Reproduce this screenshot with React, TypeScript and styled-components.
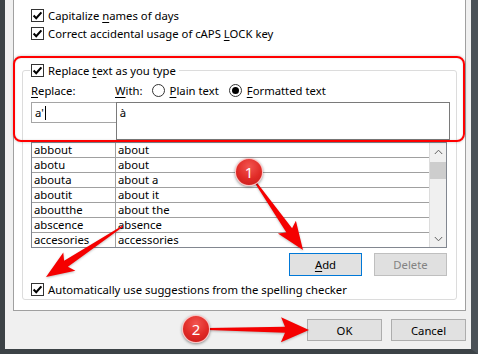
import React from 'react';
import styled, { createGlobalStyle } from 'styled-components';

const GlobalStyle = createGlobalStyle`
  html, body {
    margin: 0;
    padding: 0;
    background: #f0f0f0;
  }
  body {
    font-family: "Noto Sans", "Open Sans", sans-serif;
    font-size: 11.3px;
    color: #000;
  }
`;

const replacements: [string, string][] = [
  ['abbout', 'about'],
  ['abotu', 'about'],
  ['abouta', 'about a'],
  ['aboutit', 'about it'],
  ['aboutthe', 'about the'],
  ['abscence', 'absence'],
  ['accesories', 'accessories'],
];

type Pt = [number, number];

// tapered annotation arrow, thin at the tail and wide at the head
const arrowPoints = (
  tail: Pt,
  tip: Pt,
  tailW: number,
  neckW: number,
  headW: number,
  headLen: number
) => {
  const [x1, y1] = tail;
  const [x2, y2] = tip;
  const len = Math.hypot(x2 - x1, y2 - y1);
  const ux = (x2 - x1) / len;
  const uy = (y2 - y1) / len;
  const nx = -uy;
  const ny = ux;
  const bx = x2 - ux * headLen;
  const by = y2 - uy * headLen;
  const back = 4;
  const pts: Pt[] = [
    [x1 + (nx * tailW) / 2, y1 + (ny * tailW) / 2],
    [bx + (nx * neckW) / 2, by + (ny * neckW) / 2],
    [bx - ux * back + (nx * headW) / 2, by - uy * back + (ny * headW) / 2],
    [x2, y2],
    [bx - ux * back - (nx * headW) / 2, by - uy * back - (ny * headW) / 2],
    [bx - (nx * neckW) / 2, by - (ny * neckW) / 2],
    [x1 - (nx * tailW) / 2, y1 - (ny * tailW) / 2],
  ];
  return pts.map(p => `${p[0].toFixed(1)},${p[1].toFixed(1)}`).join(' ');
};

const CheckBox = ({ checked = true }: { checked?: boolean }) => (
  <Box>
    {checked && (
      <svg width="11" height="11" viewBox="0 0 11 11">
        <path d="M1.6 5.6 L4.2 8.2 L9.4 2.4" fill="none" stroke="#000" strokeWidth="2.1" />
      </svg>
    )}
  </Box>
);

const Chevron = ({ down }: { down?: boolean }) => (
  <svg width="9" height="6" viewBox="0 0 9 6">
    <path
      d={down ? 'M0.8 1 L4.5 4.8 L8.2 1' : 'M0.8 5 L4.5 1.2 L8.2 5'}
      fill="none"
      stroke="#606060"
      strokeWidth="1"
    />
  </svg>
);

const App = () => {
  return (
    <Stage>
      <GlobalStyle />
      <Window>
        <Panel>
          <CheckRow>
            <CheckBox />
            <span>
              Capitalize <U>n</U>ames of days
            </span>
          </CheckRow>
          <CheckRow>
            <CheckBox />
            <span>
              Correct accidental usage of cAPS <U>L</U>OCK key
            </span>
          </CheckRow>
          <Group>
            <Legend>
              <CheckBox />
              <span>
                Replace <U>t</U>ext as you type
              </span>
            </Legend>
            <LabelRow>
              <ReplaceLabel>
                <U>R</U>eplace:
              </ReplaceLabel>
              <span>
                <U>W</U>ith:
              </span>
              <RadioOption $gap={9}>
                <Radio />
                <span>
                  <U>P</U>lain text
                </span>
              </RadioOption>
              <RadioOption $gap={10}>
                <Radio $selected />
                <span>
                  <U>F</U>ormatted text
                </span>
              </RadioOption>
            </LabelRow>
            <InputRow>
              <ReplaceInput>
                a'<Caret />
              </ReplaceInput>
              <WithBox>à</WithBox>
            </InputRow>
            <Table>
              <List>
                {replacements.map(([from, to]) => (
                  <Row key={from}>
                    <Cell $first>{from}</Cell>
                    <Cell>{to}</Cell>
                  </Row>
                ))}
              </List>
              <Scrollbar>
                <ScrollButton>
                  <Chevron />
                </ScrollButton>
                <Thumb />
                <Track />
                <ScrollButton>
                  <Chevron down />
                </ScrollButton>
              </Scrollbar>
            </Table>
            <ButtonRow>
              <Button $default>
                <U>A</U>dd
              </Button>
              <Button $disabled>Delete</Button>
            </ButtonRow>
            <AutoRow>
              <CheckBox />
              <span>
                Automatically use su<U>g</U>gestions from the spelling checker
              </span>
            </AutoRow>
          </Group>
        </Panel>
        <Footer>
          <Button $wide>OK</Button>
          <Button $wide>Cancel</Button>
        </Footer>
      </Window>

      <Highlight />
      <Arrows width="478" height="354" viewBox="0 0 478 354">
        <polygon points={arrowPoints([256, 183], [303, 250], 2, 7, 22, 24)} />
        <polygon points={arrowPoints([123, 226], [46, 277], 1.5, 7, 22, 24)} />
        <polygon points={arrowPoints([208, 329], [309, 330], 2, 6, 25, 24)} />
      </Arrows>
      <Badge $x={249} $y={172}>1</Badge>
      <Badge $x={196} $y={329}>2</Badge>
    </Stage>
  );
};

const Stage = styled.div`
  position: relative;
  width: 478px;
  height: 354px;
  overflow: hidden;
`;

const Window = styled.div`
  box-sizing: border-box;
  width: 478px;
  height: 354px;
  background: #f0f0f0;
  border-left: 5px solid #3c4246;
  border-right: 7px solid #4a5157;
  border-bottom: 5px solid #3c4246;
  display: flex;
  flex-direction: column;
`;

const Panel = styled.div`
  box-sizing: border-box;
  height: 311px;
  margin: 0 5px 0 8px;
  padding: 6px 8px 0 8px;
  background: #fff;
  border: 1px solid #a0a0a0;
  border-top: none;
`;

const U = styled.span`
  text-decoration: underline;
  text-underline-offset: 2px;
`;

const Box = styled.span`
  box-sizing: border-box;
  width: 13px;
  height: 13px;
  flex: none;
  border: 1px solid #333;
  background: #fff;
  display: flex;
  align-items: center;
  justify-content: center;
`;

const CheckRow = styled.div`
  height: 18px;
  padding-left: 9px;
  display: flex;
  align-items: center;
  gap: 4px;
  white-space: nowrap;
`;

const Group = styled.fieldset`
  margin: 19px 0 0;
  padding: 0 6px 1px 8px;
  min-width: 0;
  border: 1px solid #dcdcdc;
  border-radius: 3px;
`;

const Legend = styled.legend`
  height: 18px;
  margin-left: -1px;
  padding: 0 3px 0 1px;
  display: flex;
  align-items: center;
  gap: 4px;
  white-space: nowrap;
`;

const LabelRow = styled.div`
  height: 22px;
  display: flex;
  align-items: center;
  white-space: nowrap;
`;

const ReplaceLabel = styled.span`
  width: 84px;
  flex: none;
`;

const RadioOption = styled.label<{ $gap: number }>`
  margin-left: ${p => p.$gap}px;
  display: flex;
  align-items: center;
  gap: 5px;
`;

const Radio = styled.span<{ $selected?: boolean }>`
  box-sizing: border-box;
  width: 13px;
  height: 13px;
  border: 1px solid #333;
  border-radius: 50%;
  background: #fff;
  display: flex;
  align-items: center;
  justify-content: center;
  &::after {
    content: '';
    display: ${p => (p.$selected ? 'block' : 'none')};
    width: 7px;
    height: 7px;
    border-radius: 50%;
    background: #000;
  }
`;

const InputRow = styled.div`
  margin-top: 1px;
  display: flex;
  align-items: flex-start;
`;

const ReplaceInput = styled.div`
  box-sizing: border-box;
  width: 85px;
  height: 21px;
  padding: 1px 3px;
  border: 1px solid #a5a5a5;
  border-right: none;
  line-height: 17px;
  display: flex;
  align-items: center;
`;

const Caret = styled.span`
  width: 1px;
  height: 14px;
  margin-left: 1px;
  background: #000;
`;

const WithBox = styled.div`
  box-sizing: border-box;
  width: 335px;
  height: 38px;
  padding: 1px 3px;
  border: 1px solid #7a7a7a;
  line-height: 17px;
`;

const Table = styled.div`
  box-sizing: border-box;
  width: 416px;
  height: 106px;
  margin-top: 2px;
  border: 1px solid #828790;
  display: flex;
  overflow: hidden;
`;

const List = styled.div`
  flex: 1;
`;

const Row = styled.div`
  display: grid;
  grid-template-columns: 84px 1fr;
  height: 14px;
  border-bottom: 1px solid #a0a0a0;
`;

const Cell = styled.div<{ $first?: boolean }>`
  padding-left: 2px;
  line-height: 14px;
  white-space: nowrap;
  border-right: ${p => (p.$first ? '1px solid #a0a0a0' : 'none')};
`;

const Scrollbar = styled.div`
  width: 16px;
  flex: none;
  border-left: 1px solid #dcdcdc;
  background: #f0f0f0;
  display: flex;
  flex-direction: column;
`;

const ScrollButton = styled.div`
  height: 17px;
  flex: none;
  display: flex;
  align-items: center;
  justify-content: center;
`;

const Thumb = styled.div`
  height: 17px;
  margin: 2px 0 0;
  background: #cdcdcd;
`;

const Track = styled.div`
  flex: 1;
`;

const ButtonRow = styled.div`
  width: 416px;
  margin-top: 5px;
  display: flex;
  justify-content: flex-end;
  gap: 12px;
`;

const Button = styled.div<{ $default?: boolean; $disabled?: boolean; $wide?: boolean }>`
  box-sizing: border-box;
  width: ${p => (p.$wide ? 75 : 73)}px;
  height: ${p => (p.$wide ? 22 : 23)}px;
  border: 1px solid ${p => (p.$default ? '#0078d7' : p.$disabled ? '#bfbfbf' : '#adadad')};
  background: ${p => (p.$disabled ? '#e0e0e0' : '#e1e1e1')};
  color: ${p => (p.$disabled ? '#838383' : '#000')};
  display: flex;
  align-items: center;
  justify-content: center;
`;

const AutoRow = styled(CheckRow)`
  margin-top: 4px;
  padding-left: 0;
`;

const Footer = styled.div`
  padding: 8px 5px 0 0;
  display: flex;
  justify-content: flex-end;
  gap: 9px;
`;

const Highlight = styled.div`
  position: absolute;
  left: 13px;
  top: 56px;
  width: 452px;
  height: 86px;
  box-sizing: border-box;
  border: 2px solid #ff0000;
  border-radius: 8px;
  box-shadow: 0 0 3px rgba(0, 0, 0, 0.25), inset 0 0 2px rgba(0, 0, 0, 0.15);
  pointer-events: none;
`;

const Arrows = styled.svg`
  position: absolute;
  left: 0;
  top: 0;
  pointer-events: none;
  fill: #f50000;
  filter: drop-shadow(0 1px 1px rgba(0, 0, 0, 0.25));
`;

const Badge = styled.div<{ $x: number; $y: number }>`
  position: absolute;
  left: ${p => p.$x - 14}px;
  top: ${p => p.$y - 14}px;
  box-sizing: border-box;
  width: 28px;
  height: 28px;
  border-radius: 50%;
  border: 1px solid rgba(255, 210, 210, 0.9);
  background: radial-gradient(circle at 50% 30%, #f25550 0%, #e02a26 55%, #c41a1a 100%);
  box-shadow: 0 1px 3px rgba(0, 0, 0, 0.45);
  color: #fff;
  font-family: "Noto Sans", sans-serif;
  font-size: 15px;
  line-height: 26px;
  text-align: center;
`;

export default App;
